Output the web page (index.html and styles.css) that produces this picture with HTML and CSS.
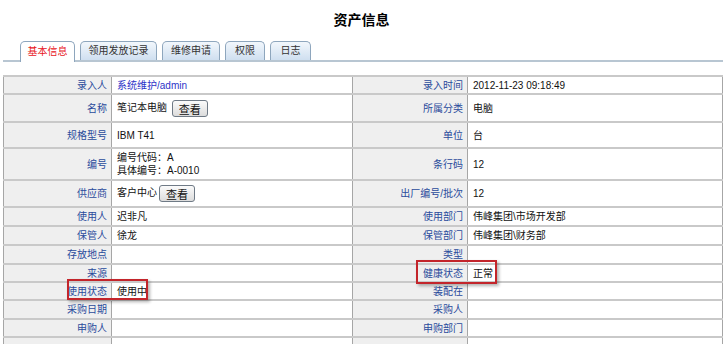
FILE: index.html
```html
<!DOCTYPE html>
<html lang="zh-CN">

<head>
    <meta charset="UTF-8">
    <meta name="viewport" content="width=device-width, initial-scale=1.0">
    <title>资产信息</title>
    <link rel="stylesheet" href="styles.css">
</head>

<body>
    <div class="page">
        <h1 class="title">资产信息</h1>

        <!-- 选项卡 -->
        <div class="tabs">
            <div class="tab active tab1">基本信息</div>
            <div class="tab tab2">领用发放记录</div>
            <div class="tab tab3">维修申请</div>
            <div class="tab tab4">权限</div>
            <div class="tab tab5">日志</div>
        </div>

        <!-- 资产明细 -->
        <table class="info">
            <colgroup>
                <col class="c1">
                <col class="c2">
                <col class="c3">
                <col class="c4">
            </colgroup>
            <tr class="r18">
                <td class="label">录入人</td>
                <td><a class="link" href="#">系统维护/admin</a></td>
                <td class="label">录入时间</td>
                <td>2012-11-23 09:18:49</td>
            </tr>
            <tr class="r28">
                <td class="label">名称</td>
                <td>笔记本电脑 <button class="btn">查看</button></td>
                <td class="label">所属分类</td>
                <td>电脑</td>
            </tr>
            <tr class="r26">
                <td class="label">规格型号</td>
                <td>IBM T41</td>
                <td class="label">单位</td>
                <td>台</td>
            </tr>
            <tr class="r32">
                <td class="label">编号</td>
                <td class="two">编号代码：A<br>具体编号：A-0010</td>
                <td class="label">条行码</td>
                <td>12</td>
            </tr>
            <tr class="r27">
                <td class="label">供应商</td>
                <td>客户中心<button class="btn">查看</button></td>
                <td class="label">出厂编号/批次</td>
                <td>12</td>
            </tr>
            <tr class="r19">
                <td class="label">使用人</td>
                <td>迟非凡</td>
                <td class="label">使用部门</td>
                <td>伟峰集团\市场开发部</td>
            </tr>
            <tr class="r19">
                <td class="label">保管人</td>
                <td>徐龙</td>
                <td class="label">保管部门</td>
                <td>伟峰集团\财务部</td>
            </tr>
            <tr class="r19">
                <td class="label">存放地点</td>
                <td></td>
                <td class="label">类型</td>
                <td></td>
            </tr>
            <tr class="r18">
                <td class="label">来源</td>
                <td></td>
                <td class="label">健康状态</td>
                <td>正常</td>
            </tr>
            <tr class="r18">
                <td class="label">使用状态</td>
                <td>使用中</td>
                <td class="label">装配在</td>
                <td></td>
            </tr>
            <tr class="r19">
                <td class="label">采购日期</td>
                <td></td>
                <td class="label">采购人</td>
                <td></td>
            </tr>
            <tr class="r18">
                <td class="label">申购人</td>
                <td></td>
                <td class="label">申购部门</td>
                <td></td>
            </tr>
            <tr class="r18">
                <td class="label"></td>
                <td></td>
                <td class="label"></td>
                <td></td>
            </tr>
        </table>

        <!-- 红框标注 -->
        <div class="mark mark-left"></div>
        <div class="mark mark-right"></div>
    </div>
</body>

</html>
```

FILE: styles.css
```css
body {
    margin: 0;
    font-family: "Liberation Sans", "Noto Sans CJK SC", sans-serif;
    font-size: 10px;
    color: #111;
    background-color: #fff;
}

.page {
    position: relative;
    width: 723px;
    height: 344px;
    overflow: hidden;
}

.title {
    margin: 0;
    padding-top: 12px;
    height: 28px;
    box-sizing: border-box;
    text-align: center;
    font-size: 14px;
    line-height: 16px;
    font-weight: bold;
    color: #000;
}

/* 选项卡 */
.tabs {
    display: flex;
    align-items: flex-end;
    margin: 12px 0 0 3px;
    padding-left: 17px;
    height: 20px;
    border-bottom: 2px solid #b8c6d2;
}

.tab {
    height: 19px;
    box-sizing: border-box;
    margin-right: 5px;
    border: 1px solid #8ea6bd;
    border-bottom: none;
    border-radius: 5px 5px 0 0;
    background: linear-gradient(#f2f7fc, #cfdff0);
    color: #333;
    text-align: center;
    line-height: 18px;
    font-size: 10px;
}

.tab.active {
    height: 21px;
    margin-bottom: -2px;
    background: #fff;
    color: #e8141b;
    line-height: 20px;
}

.tab1 { width: 55px; }
.tab2 { width: 77px; }
.tab3 { width: 58px; }
.tab4 { width: 40px; }
.tab5 { width: 41px; }

/* 明细表格 */
.info {
    margin: 13px 0 0 3px;
    width: 719px;
    border-collapse: collapse;
    table-layout: fixed;
}

.c1 { width: 108px; }
.c2 { width: 241px; }
.c3 { width: 115px; }
.c4 { width: 255px; }

.info td {
    padding: 0 5px;
    border-left: 1px solid #a6a6a6;
    border-right: 1px solid #a6a6a6;
    border-top: 2px solid #c9c9c9;
    line-height: 13px;
    vertical-align: middle;
    white-space: nowrap;
}

.info td.label {
    background-color: #efefef;
    text-align: right;
    color: #2a4b9c;
    padding-right: 4px;
}

.r18 td { height: 16px; }
.r19 td { height: 17px; }
.r26 td { height: 24px; }
.r27 td { height: 25px; }
.r28 td { height: 26px; }
.r32 td { height: 30px; }

.link {
    color: #2d33c8;
    text-decoration: none;
}

.btn {
    width: 36px;
    height: 17px;
    padding: 0;
    margin-left: 2px;
    border: 1px solid #6f7a86;
    border-radius: 3px;
    background: linear-gradient(#fbfbfb, #dcdcdc);
    font-family: "Liberation Sans", "Noto Sans CJK SC", sans-serif;
    font-size: 11px;
    color: #111;
    vertical-align: middle;
}

/* 红框 */
.mark {
    position: absolute;
    border: 2px solid #c3252b;
    box-shadow: 2px 2px 3px rgba(0, 0, 0, 0.3);
}

.mark-left {
    left: 67px;
    top: 279px;
    width: 77px;
    height: 17px;
}

.mark-right {
    left: 416px;
    top: 260px;
    width: 77px;
    height: 20px;
}
```
